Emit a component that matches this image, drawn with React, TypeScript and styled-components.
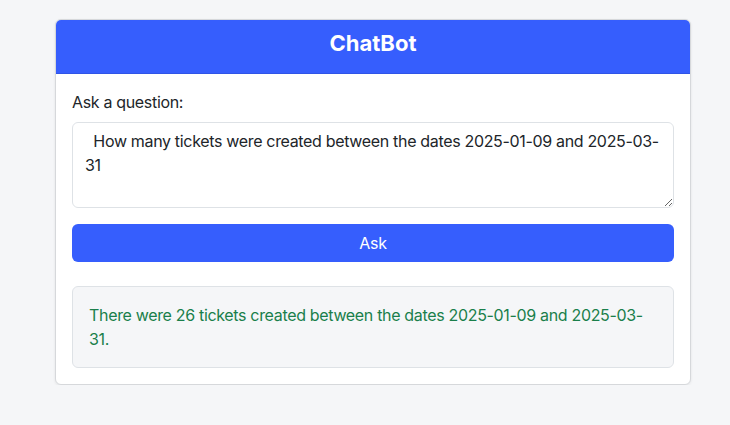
import styled, { createGlobalStyle } from "styled-components";

const GlobalStyle = createGlobalStyle`
  html, body {
    margin: 0;
    background: #f5f6f8;
    font-family: Inter, "Noto Sans", sans-serif;
    font-size: 16px;
    letter-spacing: -0.33px;
    color: #212529;
  }
`;

const Page = styled.div`
  padding: 19px 0 0 55px;
`;

const Card = styled.div`
  width: 636px;
  box-sizing: border-box;
  background: #fff;
  border: 1px solid #d6d8db;
  border-radius: 6px;
  box-shadow: 0 1px 3px rgba(0, 0, 0, 0.08);
  overflow: hidden;
`;

const CardHeader = styled.div`
  background: #365efd;
  color: #fff;
  text-align: center;
  font-size: 22px;
  font-weight: 700;
  letter-spacing: 0;
  height: 53px;
  line-height: 47px;
  border-bottom: 1px solid #2f54e6;
`;

const CardBody = styled.div`
  padding: 16px;
  display: flex;
  flex-direction: column;
`;

const Label = styled.label`
  display: block;
  line-height: 24px;
  margin-bottom: 8px;
`;

const Question = styled.textarea`
  box-sizing: border-box;
  width: 100%;
  height: 86px;
  padding: 6px 12px;
  border: 1px solid #dee2e6;
  border-radius: 6px;
  font: inherit;
  letter-spacing: inherit;
  line-height: 24px;
  color: #212529;
  resize: vertical;
  outline: none;
`;

const AskButton = styled.button`
  margin-top: 16px;
  height: 38px;
  border: none;
  border-radius: 6px;
  background: #365efd;
  color: #fff;
  font: inherit;
  letter-spacing: inherit;
  cursor: pointer;
`;

const Answer = styled.div`
  margin-top: 24px;
  padding: 16px;
  background: #f5f6f8;
  border: 1px solid #dee2e6;
  border-radius: 6px;
  color: #1a7f4b;
  line-height: 24px;
`;

export default function App() {
  return (
    <Page>
      <GlobalStyle />
      <Card>
        <CardHeader>ChatBot</CardHeader>
        <CardBody>
          <Label htmlFor="q">Ask a question:</Label>
          <Question
            id="q"
            defaultValue="  How many tickets were created between the dates 2025-01-09 and 2025-03-31"
          />
          <AskButton>Ask</AskButton>
          <Answer>
            There were 26 tickets created between the dates 2025-01-09 and 2025-03-31.
          </Answer>
        </CardBody>
      </Card>
    </Page>
  );
}
